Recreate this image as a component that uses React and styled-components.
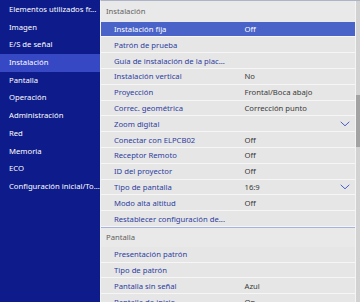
import React from "react"
import styled, { createGlobalStyle } from "styled-components"

const GlobalStyle = createGlobalStyle`
    body {
        margin: 0;
        overflow: hidden;
        font-family: "Noto Sans", "Open Sans", sans-serif;
    }
`

const menu = [
    "Elementos utilizados fr...",
    "Imagen",
    "E/S de señal",
    "Instalación",
    "Pantalla",
    "Operación",
    "Administración",
    "Red",
    "Memoria",
    "ECO",
    "Configuración inicial/To...",
]

const sections = [
    {
        title: "Instalación",
        items: [
            { label: "Instalación fija", value: "Off", active: true },
            { label: "Patrón de prueba" },
            { label: "Guía de instalación de la plac..." },
            { label: "Instalación vertical", value: "No" },
            { label: "Proyección", value: "Frontal/Boca abajo" },
            { label: "Correc. geométrica", value: "Corrección punto" },
            { label: "Zoom digital", chevron: true },
            { label: "Conectar con ELPCB02", value: "Off" },
            { label: "Receptor Remoto", value: "Off" },
            { label: "ID del proyector", value: "Off" },
            { label: "Tipo de pantalla", value: "16:9", chevron: true },
            { label: "Modo alta altitud", value: "Off" },
            { label: "Restablecer configuración de..." },
        ],
    },
    {
        title: "Pantalla",
        items: [
            { label: "Presentación patrón" },
            { label: "Tipo de patrón" },
            { label: "Pantalla sin señal", value: "Azul" },
            { label: "Pantalla de inicio", value: "On" },
        ],
    },
]

const Chevron = () => (
    <svg width="10" height="6" viewBox="0 0 10 6">
        <polyline points="0.7,0.8 5,4.8 9.3,0.8" fill="none" stroke="#4a5ec6" strokeWidth="1" />
    </svg>
)

const App = () => {
    return (
        <>
            <GlobalStyle />
            <StyledScreen>
                <StyledSidebar>
                    {menu.map((m) => (
                        <StyledMenuItem key={m} $active={m === "Instalación"}>
                            {m}
                        </StyledMenuItem>
                    ))}
                </StyledSidebar>
                <StyledPanel>
                    <StyledList>
                        {sections.map((s, i) => (
                            <div key={s.title}>
                                <StyledHeader $first={i === 0}>{s.title}</StyledHeader>
                                {s.items.map((it) => (
                                    <StyledRow key={it.label} $active={it.active}>
                                        <StyledLabel>{it.label}</StyledLabel>
                                        <StyledValue $active={it.active}>{it.value}</StyledValue>
                                        {it.chevron && (
                                            <StyledChevron>
                                                <Chevron />
                                            </StyledChevron>
                                        )}
                                    </StyledRow>
                                ))}
                            </div>
                        ))}
                    </StyledList>
                    <StyledScrollbar>
                        <StyledThumb />
                    </StyledScrollbar>
                </StyledPanel>
            </StyledScreen>
        </>
    )
}

const StyledScreen = styled.div`
    display: flex;
    width: 360px;
    height: 302px;
    overflow: hidden;
    background: #ececec;
    font-size: 7.7px;
`

const StyledSidebar = styled.div`
    width: 100px;
    flex-shrink: 0;
    padding-top: 1px;
    background: #0d1b8b;
    box-sizing: border-box;
`

const StyledMenuItem = styled.div`
    height: 17.7px;
    line-height: 17.7px;
    padding-left: 9px;
    color: #ffffff;
    white-space: nowrap;
    overflow: hidden;
    background: ${(p) => (p.$active ? "#3748c4" : "transparent")};
`

const StyledPanel = styled.div`
    flex: 1;
    display: flex;
    border-left: 1px solid #f2f3f7;
    border-top: 1px solid #aeb4c8;
    background: #e9e9e9;
`

const StyledList = styled.div`
    flex: 1;
    overflow: hidden;
`

const StyledHeader = styled.div`
    height: ${(p) => (p.$first ? "20.7px" : "18.7px")};
    line-height: ${(p) => (p.$first ? "20.7px" : "18.7px")};
    padding-left: 5px;
    color: #616161;
    border-top: ${(p) => (p.$first ? "none" : "1px solid #a9b2dc")};
    background: #e9e9e9;
`

const StyledRow = styled.div`
    display: flex;
    align-items: center;
    height: 14.8px;
    border-bottom: 1px solid #f6f6f6;
    padding-left: 13px;
    background: ${(p) => (p.$active ? "#4a63c9" : "#e6e6e6")};
    color: ${(p) => (p.$active ? "#ffffff" : "#2d3d9e")};
`

const StyledLabel = styled.div`
    width: 130.5px;
    white-space: nowrap;
    overflow: hidden;
`

const StyledValue = styled.div`
    flex: 1;
    white-space: nowrap;
    color: ${(p) => (p.$active ? "#ffffff" : "#3a3a3a")};
`

const StyledChevron = styled.div`
    display: flex;
    width: 10px;
    margin-right: 5px;
`

const StyledScrollbar = styled.div`
    width: 5px;
    flex-shrink: 0;
    background: #d2d2d2;
    border-left: 1px solid #f4f4f4;
    box-sizing: border-box;
    padding-top: 94px;
`

const StyledThumb = styled.div`
    width: 100%;
    height: 52px;
    background: #a3a3a3;
`

export default App
